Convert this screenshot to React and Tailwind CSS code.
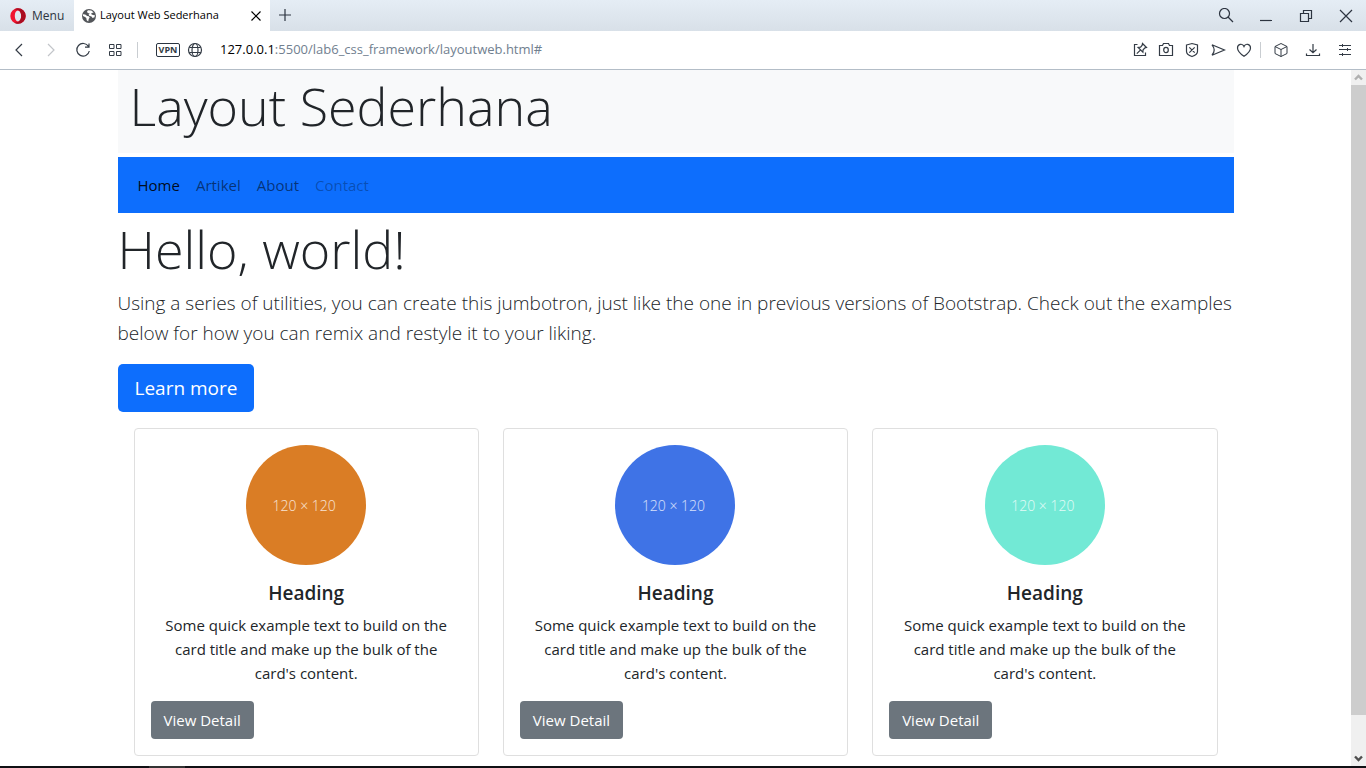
import React from "react";

const stroke = { fill: "none", stroke: "currentColor", strokeWidth: 1.2 };

function Icon({ children, className = "" }) {
  return (
    <svg viewBox="0 0 16 16" className={`size-4 shrink-0 ${className}`} aria-hidden="true" {...stroke}>
      {children}
    </svg>
  );
}

function IconButton({ label, className = "", children }) {
  return (
    <button type="button" aria-label={label} className={`flex size-4 shrink-0 items-center justify-center ${className}`}>
      <Icon>{children}</Icon>
    </button>
  );
}

function TabBar() {
  return (
    <div className="flex h-[31px] shrink-0 items-stretch bg-linear-to-b from-[#e5edf5] to-[#d8e0e8] text-[#2c3440]">
      <button type="button" className="flex w-[74px] items-center gap-[6px] pl-[10px] text-[12px]">
        <svg viewBox="0 0 16 16" className="size-4" aria-hidden="true">
          <path
            fillRule="evenodd"
            fill="#f0142f"
            d="M8 0.3a7.7 7.7 0 1 0 0 15.4A7.7 7.7 0 1 0 8 .3ZM8 2.6c2 0 3.2 2.4 3.2 5.4S10 13.400 8 13.400 4.800 11 4.800 8 6 2.600 8 2.600Z"
          />
          <path
            fill="#a90d20"
            d="M8 .3a7.700 7.700 0 0 1 0 15.400c-1.500 0-2.600-.5-3.600-1.300C8.500 15 11.200 12 11.200 8S8.500 1 4.400 1.600C5.400.8 6.500.3 8 .3Z"
          />
        </svg>
        Menu
      </button>
      <div className="flex w-[196px] items-center bg-white pr-[6px] pl-[7px] text-[11px] text-black">
        <svg viewBox="0 0 16 16" className="size-4 shrink-0" aria-hidden="true">
          <circle cx="8" cy="8" r="7" fill="#53565a" />
          <path
            fill="#fff"
            d="M2 6.200 4.200 6.600 6.200 8l1.600.3.900 1.200-1 1.500-.5 2.600-1.500-1.300-.4-2.200-1.300-1.200L2 8ZM7 2.300 10.300 2.400l2.400 2.200-1.900.3-.8 1.200 1.900.9 2 .3-.4 2-1.900.7-1.100-1.400-2.300-.9-.6-1.200 1.100-1-2-.6-.700-1.300Z"
          />
        </svg>
        <span className="ml-[3px] flex-1 whitespace-nowrap">Layout Web Sederhana</span>
        <IconButton label="Close tab">
          <path d="m3.500 3.500 9 9m0-9-9 9" />
        </IconButton>
      </div>
      <IconButton label="New tab" className="mt-[7px] ml-[7px]">
        <path d="M8 2v12M2 8h12" />
      </IconButton>
      <div className="ml-auto flex items-center gap-6 pr-[12px]">
        <IconButton label="Search tabs">
          <circle cx="6.500" cy="5.500" r="5" />
          <path d="m10 9 5 5" />
        </IconButton>
        <IconButton label="Minimize">
          <path d="M2 12.500h12" />
        </IconButton>
        <IconButton label="Restore">
          <path d="M2.500 5.500h8v8h-8ZM5.500 5.500v-3h8v8h-3" />
        </IconButton>
        <IconButton label="Close window">
          <path d="m2 2 12 12M14 2 2 14" />
        </IconButton>
      </div>
    </div>
  );
}

function AddressBar() {
  return (
    <div className="flex h-[39px] shrink-0 items-center border-b border-[#b3bdc7] bg-white pr-[13px] pl-[11px] text-[#333b45]">
      <div className="flex items-center gap-4">
        <IconButton label="Back">
          <path d="M11 2 5 8l6 6" />
        </IconButton>
        <IconButton label="Forward" className="text-[#c2c5c9]">
          <path d="m5 2 6 6-6 6" />
        </IconButton>
        <IconButton label="Reload">
          <path d="M13.500 4.500A6.300 6.300 0 1 0 14.300 9M14 1.500v3.700h-4" />
        </IconButton>
        <IconButton label="Speed dial">
          <path d="M2.500 2.500h4.500v4h-4.500ZM9.500 2.500H14v4H9.500ZM2.500 9.500h4.500v4h-4.500ZM9.500 9.500H14v4H9.500Z" strokeWidth="1" />
        </IconButton>
      </div>
      <div className="ml-[14px] h-4 w-px bg-[#c9cdd1]" />
      <button
        type="button"
        className="ml-[18px] flex h-[14px] w-6 items-center justify-center rounded-xs border border-[#2a3440] text-[9px] font-bold"
      >
        VPN
      </button>
      <IconButton label="Site information" className="ml-[7px]">
        <circle cx="8" cy="8" r="6.500" />
        <ellipse cx="8" cy="8" rx="3" ry="6.500" />
        <path d="M2.300 5.500h11.400M2.300 10.500h11.400" />
      </IconButton>
      <div className="ml-[17px] min-w-0 flex-1 text-[13px] whitespace-nowrap text-[#71808f]">
        <span className="text-black">127.0.0.1</span>:5500/lab6_css_framework/layoutweb.html#
      </div>
      <div className="flex items-center gap-[10px]">
        <IconButton label="Pinboards">
          <path d="M5.500 2.500h-3v11h11v-3" />
          <path d="m10.500 1.500 4 4-1.500.4-1.900 1.900-.2 2.400-4.800-4.800 2.500-.3 1.600-1.900ZM8.400 8.100l-3.600 3.600" />
        </IconButton>
        <IconButton label="Snapshot">
          <path d="M1.500 3.500h3l1-2h5l1 2h3v10h-13Z" />
          <ellipse cx="8" cy="8" rx="2.300" ry="2.600" />
        </IconButton>
        <IconButton label="Ad blocker">
          <path d="M2.500 3 8 1.500 13.500 3v6.500c0 2.500-2.500 4-5.500 5-3-1-5.500-2.500-5.500-5ZM5.300 5.300l5.400 5.400M10.700 5.300l-5.400 5.400" />
        </IconButton>
        <IconButton label="My Flow">
          <path d="M2 2.800 14.500 8 2 13.200C4.700 10 4.700 6 2 2.800Z" />
        </IconButton>
        <IconButton label="Bookmark">
          <path d="M8 14.300C4.500 11.800 1.500 9.300 1.500 5.900c0-4 5-5 6.500-1.500 1.500-3.500 6.500-2.500 6.500 1.500 0 3.400-3 5.900-6.500 8.400Z" />
        </IconButton>
      </div>
      <div className="ml-2 h-4 w-px bg-[#c9cdd1]" />
      <div className="ml-3 flex items-center gap-4">
        <IconButton label="Extensions">
          <path d="M8 1.500 14 4.500v7l-6 3-6-3v-7ZM2 4.500l6 3 6-3M8 7.500v7" strokeWidth="1" />
        </IconButton>
        <IconButton label="Downloads">
          <path d="M8 2v8.500M4.500 7.500 8 10.800l3.500-3.300M1.500 11.500v2h13v-2" />
        </IconButton>
        <IconButton label="Easy setup">
          <path d="M2 3.500h12M2 7.500h12M2 12.500h12M5.500 2v3M10.500 6v3M5.500 11v3" strokeWidth="1" />
        </IconButton>
      </div>
    </div>
  );
}

function Card({ circle }) {
  return (
    <article className="flex flex-col rounded-sm border border-[#dfdfdf] p-4">
      <div className={`flex size-[120px] items-center justify-center self-center rounded-full pr-1 text-[14px] font-light text-white/80 ${circle}`}>
        120 × 120
      </div>
      <h5 className="mt-4 mb-2 text-center text-[19px] leading-6 font-semibold">Heading</h5>
      <p className="mb-4 px-2 text-center text-[15px] leading-6">
        Some quick example text to build on the card title and make up the bulk of the card's content.
      </p>
      <a href="#" className="self-start rounded-sm bg-[#6c757d] px-[13px] py-[7px] text-[15px] leading-6 text-white">
        View Detail
      </a>
    </article>
  );
}

function Scrollbar() {
  return (
    <div className="flex w-[15px] shrink-0 flex-col bg-[#f0f0f0]" aria-hidden="true">
      <svg viewBox="0 0 15 15" className="size-[15px]" fill="none" stroke="#b0b0b0" strokeWidth="2.400">
        <path d="m4 9.500 3.500-3.500L11 9.500" />
      </svg>
      <div className="grow-[630] bg-[#cdcdcd]" />
      <div className="grow-[36]" />
      <svg viewBox="0 0 15 15" className="size-[15px]" fill="none" stroke="#505050" strokeWidth="2.400">
        <path d="m4 5.500 3.500 3.500L11 5.500" />
      </svg>
    </div>
  );
}

const circles = ["bg-[#da7d25]", "bg-[#3f73e6]", "bg-[#72e9d5]"];

export default function App() {
  return (
    <div className="flex h-screen flex-col overflow-hidden bg-white font-['Open_Sans','Noto_Sans',sans-serif] text-[#212529]">
      <TabBar />
      <AddressBar />
      <div className="flex min-h-0 flex-1">
        <div className="min-w-0 flex-1 overflow-hidden">
          <div className="mx-auto max-w-[1140px] px-3">
            <header className="mb-1 bg-[#f8f9fa] px-3 pb-[11px]">
              <h1 className="text-[52px] leading-[72px] font-light">Layout Sederhana</h1>
            </header>
            <nav className="flex h-14 items-center gap-4 bg-[#0d6efd] px-5 text-[15px]">
              <a href="#" className="text-black/90">Home</a>
              <a href="#" className="text-black/55">Artikel</a>
              <a href="#" className="text-black/55">About</a>
              <a href="#" className="text-black/30">Contact</a>
            </nav>
            <section>
              <h1 className="mb-[3px] text-[52px] leading-[72px] font-light">Hello, world!</h1>
              <p className="mb-4 text-[19px] leading-[30px] font-light">
                Using a series of utilities, you can create this jumbotron, just like the one in previous versions of
                Bootstrap. Check out the examples below for how you can remix and restyle it to your liking.
              </p>
              <a href="#" className="inline-block rounded-[5px] bg-[#0d6efd] px-[17px] py-[9px] text-[19px] leading-[30px] text-white">
                Learn more
              </a>
            </section>
            <section className="grid grid-cols-3 gap-6 p-4">
              {circles.map((circle) => (
                <Card key={circle} circle={circle} />
              ))}
            </section>
          </div>
        </div>
        <Scrollbar />
      </div>
      <div className="h-[2px] shrink-0 bg-[#101014] pl-[149px]">
        <div className="h-full w-9 bg-[#333333]" />
      </div>
    </div>
  );
}
